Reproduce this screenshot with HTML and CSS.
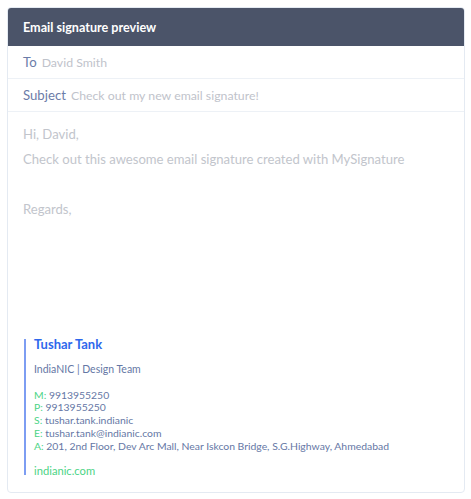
FILE: index.html
```html
<!DOCTYPE html>
<html>
<head>
<meta charset="utf-8">
<link rel="stylesheet" href="styles.css">
</head>
<body>
<div class="card">
  <div class="card-header">Email signature preview</div>
  <div class="field-row"><span class="field-label">To</span><span class="field-value">David Smith</span></div>
  <div class="field-row"><span class="field-label">Subject</span><span class="field-value">Check out my new email signature!</span></div>
  <div class="email-body">
    <div class="body-line">Hi, David,</div>
    <div class="body-line">Check out this awesome email signature created with MySignature</div>
    <div class="body-line">&nbsp;</div>
    <div class="body-line">Regards,</div>
    <div class="signature">
      <div class="sig-name">Tushar Tank</div>
      <div class="sig-company">IndiaNIC | Design Team</div>
      <div class="sig-contacts">
        <div><span class="sig-key">M:</span> 9913955250</div>
        <div><span class="sig-key">P:</span> 9913955250</div>
        <div><span class="sig-key">S:</span> tushar.tank.indianic</div>
        <div><span class="sig-key">E:</span> tushar.tank@indianic.com</div>
        <div><span class="sig-key">A:</span> 201, 2nd Floor, Dev Arc Mall, Near Iskcon Bridge, S.G.Highway, Ahmedabad</div>
      </div>
      <div class="sig-site">indianic.com</div>
    </div>
  </div>
</div>
</body>
</html>
```
FILE: styles.css
```css
* { box-sizing: border-box; }
html, body { margin: 0; padding: 0; background: #ffffff; }
body {
  font-family: Lato, "Open Sans", sans-serif;
  padding: 7px 6px 0 7px;
}
.card {
  height: 486px;
  border: 1px solid #e4eaf2;
  border-radius: 4px;
  display: flex;
  flex-direction: column;
  overflow: hidden;
  background: #fff;
}
.card-header {
  height: 38px;
  background: #4b5469;
  color: #ffffff;
  font-size: 12.6px;
  font-weight: 700;
  display: flex;
  align-items: center;
  padding-left: 15px;
  flex: none;
}
.field-row {
  height: 33px;
  border-bottom: 1px solid #edf1f6;
  display: flex;
  align-items: center;
  gap: 5px;
  padding-left: 15px;
  flex: none;
}
.field-label { color: #6b7ca8; font-size: 13.2px; }
.field-value { color: #bfc3cb; font-size: 12.3px; }
.email-body {
  flex: 1;
  display: flex;
  flex-direction: column;
  padding: 10px 15px 17px 15px;
}
.body-line {
  color: #c2c5cc;
  font-size: 13.1px;
  line-height: 25px;
}
.signature {
  margin-top: auto;
  border-left: 2px solid #7d9df2;
  padding-left: 8px;
  margin-left: 1px;
}
.sig-name {
  color: #2e68ec;
  font-size: 13px;
  font-weight: 700;
  line-height: 10px;
}
.sig-company {
  color: #6577a5;
  font-size: 10.5px;
  line-height: 16px;
  margin-top: 12px;
}
.sig-contacts {
  color: #6577a5;
  font-size: 10.4px;
  line-height: 12.8px;
  margin-top: 11.5px;
}
.sig-key { color: #4cd486; }
.sig-site {
  color: #4cd486;
  font-size: 11.2px;
  line-height: 8px;
  margin-top: 14.5px;
}
```
